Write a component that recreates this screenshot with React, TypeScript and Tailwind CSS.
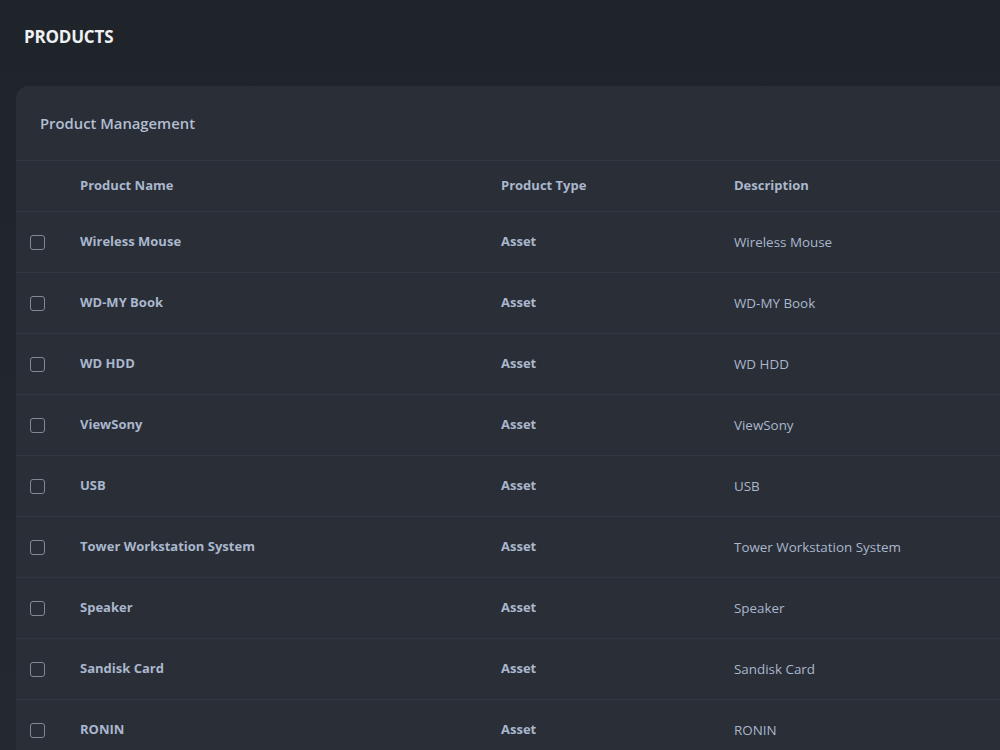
import React from "react";

const rows = [
  "Wireless Mouse",
  "WD-MY Book",
  "WD HDD",
  "ViewSony",
  "USB",
  "Tower Workstation System",
  "Speaker",
  "Sandisk Card",
  "RONIN",
];

export default function App() {
  return (
    <div
      className="w-[1000px] h-[750px] overflow-hidden bg-gradient-to-b from-[#1f232a] to-[#242930]"
      style={{ fontFamily: '"Open Sans", "Noto Sans", sans-serif' }}
    >
      <div className="pl-6 pt-[27px] h-[86px]">
        <h1 className="text-[17px] font-bold text-[#eef0f3] leading-[20px] tracking-[-0.2px]">PRODUCTS</h1>
      </div>
      <div className="ml-4 w-[1100px] rounded-xl bg-[#292e37]">
        <div className="h-[75px] flex items-center pl-6 border-b border-[#313741]">
          <span className="text-[14.8px] font-semibold text-[#b3bfd2]">Product Management</span>
        </div>
        <div className="h-[51px] flex items-center border-b border-[#313741] text-[13px] font-bold text-[#aab7cc]">
          <div className="w-[64px]" />
          <div className="w-[421px]">Product Name</div>
          <div className="w-[233px]">Product Type</div>
          <div>Description</div>
        </div>
        {rows.map((r) => (
          <div
            key={r}
            className="h-[61px] flex items-center border-b border-[#313741] text-[13px] text-[#aab7cc]"
          >
            <div className="w-[64px] pl-[14px] flex items-center">
              <div className="w-[15px] h-[15px] rounded-[3px] border border-[#808995]" />
            </div>
            <div className="w-[421px] font-bold">{r}</div>
            <div className="w-[233px] font-bold">Asset</div>
            <div className="text-[13.4px]">{r}</div>
          </div>
        ))}
      </div>
    </div>
  );
}
